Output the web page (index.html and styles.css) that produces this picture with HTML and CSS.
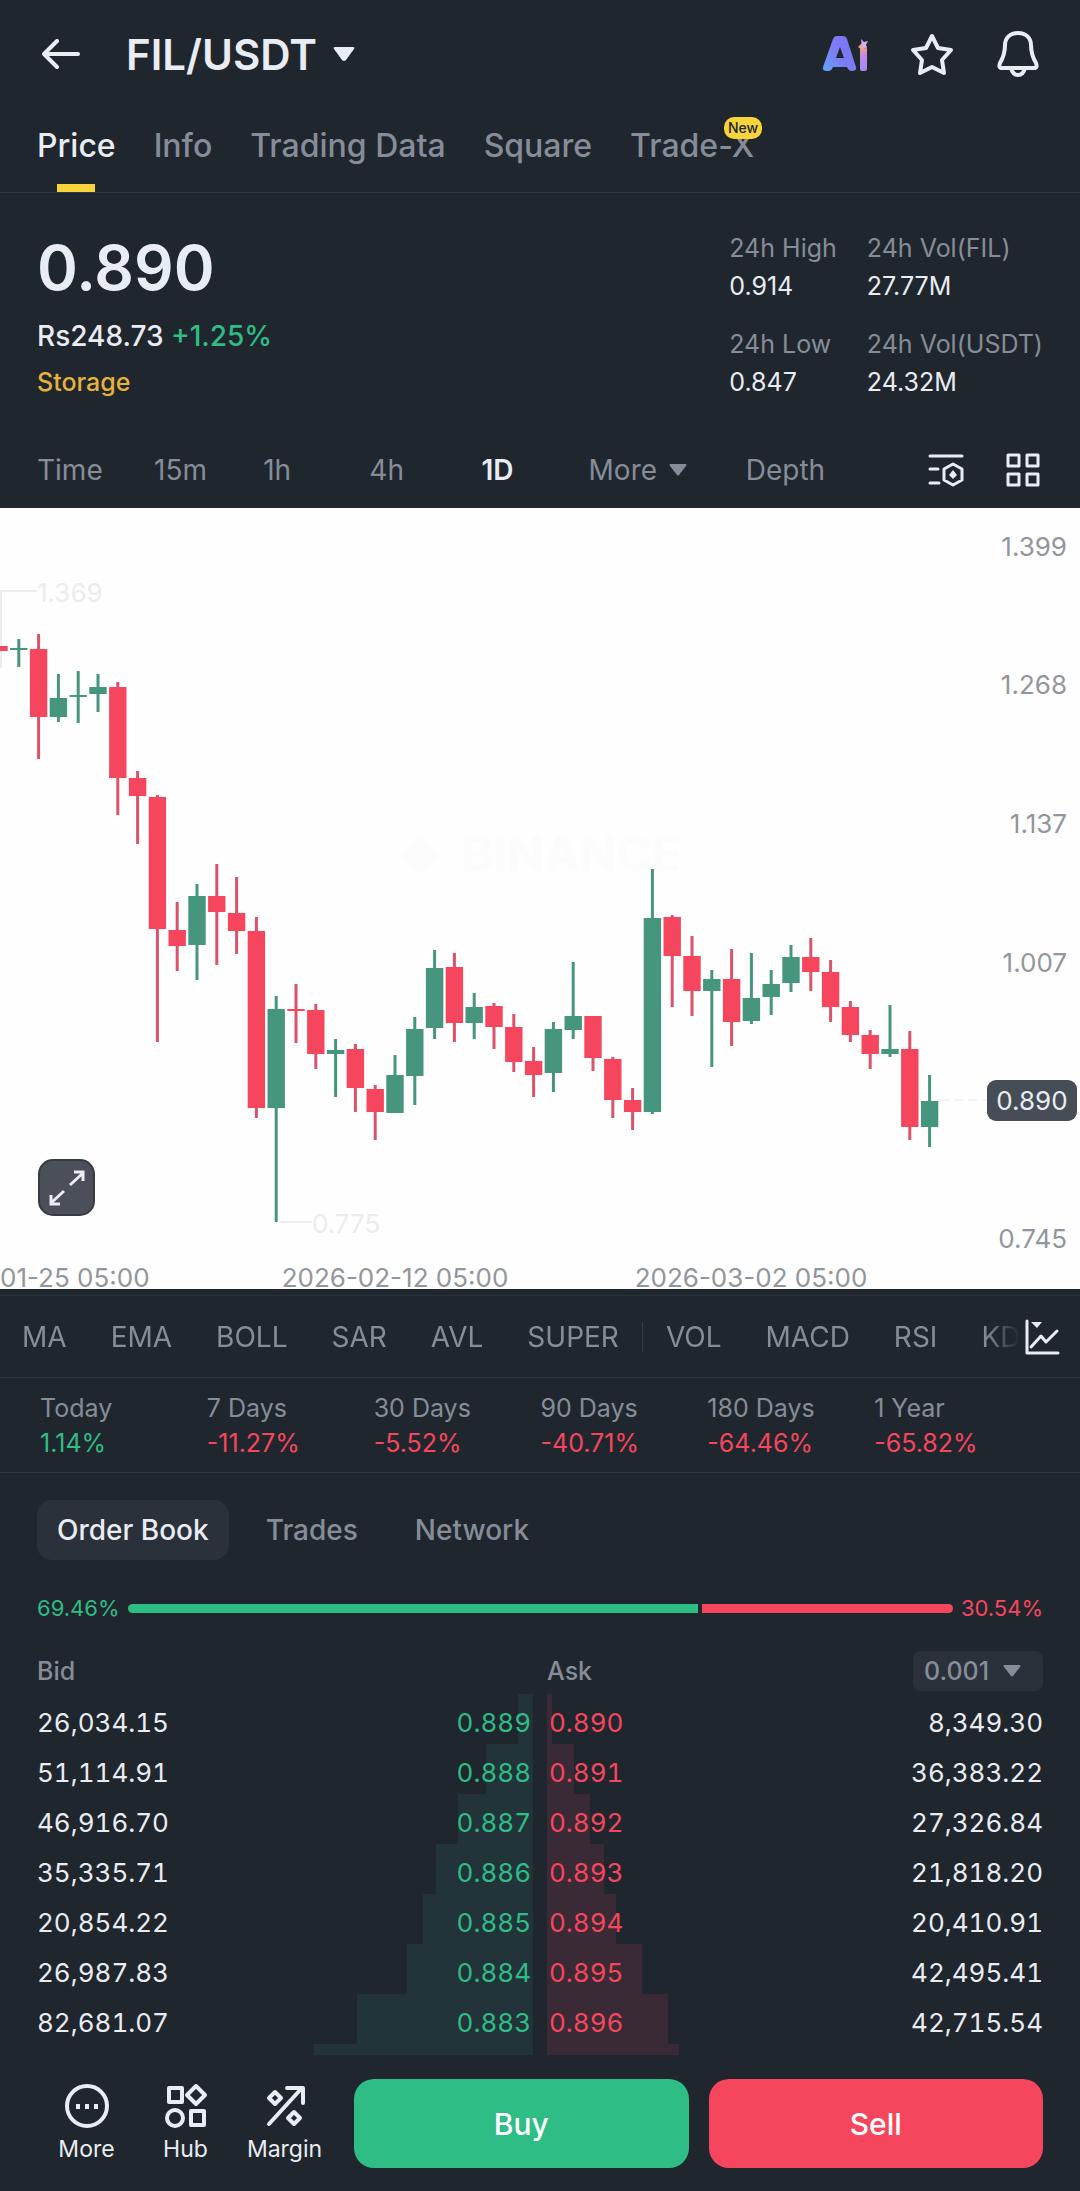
FILE: index.html
```
<!DOCTYPE html>
<html lang="en">
<head>
  <meta charset="UTF-8" />
  <meta name="viewport" content="width=device-width, initial-scale=1" />
  <title>FIL/USDT</title>
  <link rel="stylesheet" href="styles.css">
</head>
<body>
  <!-- Top bar -->
  <header class="topbar">
    <button class="icon-btn back" aria-label="Back">
      <svg width="38" height="30" viewBox="0 0 38 30"><path d="M36 15H2M15 2L2 15l13 13" class="line"/></svg>
    </button>
    <button class="pair">
      <h1>FIL/USDT</h1>
      <svg width="22" height="16" viewBox="0 0 22 16"><path d="M2 1h18q2 0 1 2l-8 11q-2 2-4 0L1 3Q0 1 2 1z" fill="currentColor"/></svg>
    </button>
    <div class="top-actions">
      <button class="icon-btn" aria-label="AI">
        <svg width="46" height="38" viewBox="0 0 46 38">
          <defs>
            <linearGradient id="aiA" x1="0" y1="1" x2="1" y2="0.3">
              <stop offset="0" stop-color="#5fa8ff"/>
              <stop offset="0.5" stop-color="#7d7cf4"/>
              <stop offset="1" stop-color="#7b74f5"/>
            </linearGradient>
            <linearGradient id="aiI" x1="0" y1="0" x2="0" y2="1">
              <stop offset="0" stop-color="#f0a08c"/>
              <stop offset="0.3" stop-color="#c58be0"/>
              <stop offset="1" stop-color="#9c8bf8"/>
            </linearGradient>
          </defs>
          <path fill="url(#aiA)" fill-rule="evenodd" d="M11 4q1-3 4-3h6q3 0 4 3l9 28q1 4-4 4-3 0-4-2l-1-2H11l-1 2q-1 2-5 2-5 0-4-4zM18 12l-4 11h8z"/>
          <path fill="url(#aiI)" d="M38 14l7-1v21q0 2-2 2h-3q-2 0-2-2z"/>
          <path fill="#f0a890" d="M36 12l4-4 5 4-5 3z"/>
          <path fill="#cbb0f5" d="M39 4l3 3 4-1-2 4 1 3-5-1z"/>
        </svg>
      </button>
      <button class="icon-btn" aria-label="Add to favourites">
        <svg width="44" height="44" viewBox="0 0 44 44"><path class="line" d="M22 4l6 12 13 2-9 10 2 13-12-6-12 6 2-13-9-10 13-2z"/></svg>
      </button>
      <button class="icon-btn" aria-label="Alerts">
        <svg width="44" height="48" viewBox="0 0 44 48">
          <path class="line" d="M22 3c-8 0-13 5-13 12 0 9-2 13-5 18-1 3-1 5 2 5h32c3 0 3-2 2-5-3-5-5-9-5-18C35 8 30 3 22 3z"/>
          <path class="line" d="M15 38c1 4 3 7 7 7s6-3 7-7"/>
        </svg>
      </button>
    </div>
  </header>

  <nav class="tabs">
    <a href="#" class="active">Price</a>
    <a href="#">Info</a>
    <a href="#">Trading Data</a>
    <a href="#">Square</a>
    <a href="#">Trade-X<span class="badge">New</span></a>
  </nav>

  <!-- Price summary -->
  <section class="summary">
    <div>
      <div class="last-price">0.890</div>
      <div class="fiat">Rs248.73 <span class="up">+1.25%</span></div>
      <a href="#" class="tag">Storage</a>
    </div>
    <dl class="stats">
      <div><dt>24h High</dt><dd>0.914</dd></div>
      <div><dt>24h Vol(FIL)</dt><dd>27.77M</dd></div>
      <div><dt>24h Low</dt><dd>0.847</dd></div>
      <div><dt>24h Vol(USDT)</dt><dd>24.32M</dd></div>
    </dl>
  </section>

  <!-- Intervals -->
  <div class="intervals">
    <button>Time</button>
    <button>15m</button>
    <button>1h</button>
    <button>4h</button>
    <button class="active">1D</button>
    <button>More <svg width="18" height="12" viewBox="0 0 18 12"><path d="M1 0h16q1 1 0 2l-7 9q-1 1-2 0L1 2q-1-1 0-2z" fill="currentColor"/></svg></button>
    <button>Depth</button>
    <button class="icon-btn" aria-label="Chart settings">
      <svg width="36" height="36" viewBox="0 0 36 36">
        <path class="line thin" d="M2 4h32M2 17h8M2 31h9M25 12l9 5v11l-9 5-9-5V17z"/>
        <path d="M25 18l4 5-4 4-4-4z" fill="currentColor"/>
      </svg>
    </button>
    <button class="icon-btn" aria-label="Layout">
      <svg width="36" height="36" viewBox="0 0 36 36"><path class="line thin" d="M3 3h11v11H3zM22 3h11v11H22zM3 22h11v11H3zM22 22h11v11H22z"/></svg>
    </button>
  </div>

  <!-- Candle chart -->
  <section class="chart">
    <svg id="candles" viewBox="0 0 1080 781" role="img" aria-label="FIL/USDT daily candles">
      <g class="watermark">
        <path d="M420 326l20 20-20 20-20-20z"/>
        <text x="462" y="363">BINANCE</text>
      </g>
      <g class="hint">
        <path d="M1 160V83h36M280 714h32"/>
        <path class="dashed" d="M940 592h46"/>
        <text x="37" y="94">1.369</text>
        <text x="312" y="725">0.775</text>
      </g>
      <g class="axis axis-y">
        <text x="1067" y="48">1.399</text>
        <text x="1067" y="186">1.268</text>
        <text x="1067" y="325">1.137</text>
        <text x="1067" y="464">1.007</text>
        <text x="1067" y="740">0.745</text>
      </g>
      <g class="axis">
        <text x="0" y="779">01-25 05:00</text>
        <text x="395" y="779" text-anchor="middle">2026-02-12 05:00</text>
        <text x="751" y="779" text-anchor="middle">2026-03-02 05:00</text>
      </g>
      <g class="current">
        <rect x="987" y="572" width="90" height="41" rx="9"/>
        <text x="1032" y="602">0.890</text>
      </g>
    </svg>
    <button class="expand" aria-label="Full screen">
      <svg width="36" height="36" viewBox="0 0 36 36"><path d="M21 15L34 3M25 2h9v9M15 21L2 33M2 25v9h9"/></svg>
    </button>
  </section>

  <!-- Indicators -->
  <div class="indicators">
    <div class="indicator-list">
      <button>MA</button>
      <button>EMA</button>
      <button>BOLL</button>
      <button>SAR</button>
      <button>AVL</button>
      <button>SUPER</button>
      <span class="divider"></span>
      <button>VOL</button>
      <button>MACD</button>
      <button>RSI</button>
      <button>KDJ</button>
    </div>
    <button class="icon-btn" aria-label="Indicator settings">
      <svg width="36" height="38" viewBox="0 0 36 38">
        <path class="line thin" d="M3 3v32h31M7 29l10-11 5 6 11-11"/>
        <path d="M7 4h11l-5 6z" fill="currentColor"/>
      </svg>
    </button>
  </div>

  <dl class="periods">
    <div><dt>Today</dt><dd class="up">1.14%</dd></div>
    <div><dt>7 Days</dt><dd class="down">-11.27%</dd></div>
    <div><dt>30 Days</dt><dd class="down">-5.52%</dd></div>
    <div><dt>90 Days</dt><dd class="down">-40.71%</dd></div>
    <div><dt>180 Days</dt><dd class="down">-64.46%</dd></div>
    <div><dt>1 Year</dt><dd class="down">-65.82%</dd></div>
  </dl>

  <!-- Order book -->
  <section class="book">
    <div class="book-tabs">
      <button class="active">Order Book</button>
      <button>Trades</button>
      <button>Network</button>
    </div>

    <div class="ratio">
      <span class="up">69.46%</span>
      <div class="ratio-bar">
        <i class="buy" style="flex-grow: 69.46"></i>
        <i class="sell" style="flex-grow: 30.54"></i>
      </div>
      <span class="down">30.54%</span>
    </div>

    <div class="book-head">
      <span>Bid</span>
      <div class="ask-head">
        <span>Ask</span>
        <label class="step">
          <select aria-label="Price step">
            <option>0.001</option>
            <option>0.01</option>
          </select>
          <svg width="18" height="12" viewBox="0 0 18 12"><path d="M1 0h16q1 1 0 2l-7 9q-1 1-2 0L1 2q-1-1 0-2z" fill="currentColor"/></svg>
        </label>
      </div>
    </div>

    <div class="book-sides">
      <table class="bids" aria-label="Bids">
        <tr style="--depth: 3%"><td>26,034.15</td><td>0.889</td></tr>
        <tr style="--depth: 9.5%"><td>51,114.91</td><td>0.888</td></tr>
        <tr style="--depth: 15%"><td>46,916.70</td><td>0.887</td></tr>
        <tr style="--depth: 19.5%"><td>35,335.71</td><td>0.886</td></tr>
        <tr style="--depth: 22.2%"><td>20,854.22</td><td>0.885</td></tr>
        <tr style="--depth: 25.4%"><td>26,987.83</td><td>0.884</td></tr>
        <tr style="--depth: 35.4%"><td>82,681.07</td><td>0.883</td></tr>
        <tr class="cut" style="--depth: 44.2%"><td></td><td></td></tr>
      </table>
      <table class="asks" aria-label="Asks">
        <tr style="--depth: 1%"><td>0.890</td><td>8,349.30</td></tr>
        <tr style="--depth: 5.4%"><td>0.891</td><td>36,383.22</td></tr>
        <tr style="--depth: 8.6%"><td>0.892</td><td>27,326.84</td></tr>
        <tr style="--depth: 11.5%"><td>0.893</td><td>21,818.20</td></tr>
        <tr style="--depth: 13.9%"><td>0.894</td><td>20,410.91</td></tr>
        <tr style="--depth: 19.2%"><td>0.895</td><td>42,495.41</td></tr>
        <tr style="--depth: 24.4%"><td>0.896</td><td>42,715.54</td></tr>
        <tr class="cut" style="--depth: 26.6%"><td></td><td></td></tr>
      </table>
    </div>
  </section>

  <!-- Bottom actions -->
  <footer class="bottom">
    <div class="shortcuts">
      <a href="#">
        <svg width="44" height="46" viewBox="0 0 44 46">
          <circle class="line" cx="22" cy="23" r="20"/>
          <path d="M11 21h4v5h-4zM20 21h4v5h-4zM29 21h4v5h-4z" fill="currentColor"/>
        </svg>
        More
      </a>
      <a href="#">
        <svg width="44" height="46" viewBox="0 0 44 46">
          <path class="line" d="M5 5h13v14H5zM27 28h13v14H27zM32 3l9 9-9 9-9-9z"/>
          <circle class="line" cx="11" cy="35" r="8"/>
        </svg>
        Hub
      </a>
      <a href="#">
        <svg width="44" height="46" viewBox="0 0 44 46">
          <path class="line" d="M6 41L38 6M24 5h16v15M12 9l6 6-6 6-6-6zM31 29l6 6-6 6-6-6z"/>
        </svg>
        Margin
      </a>
    </div>
    <button class="trade buy">Buy</button>
    <button class="trade sell">Sell</button>
  </footer>

  <script src="chart.js"></script>
</body>
</html>
```
FILE: styles.css
```
/* === BASE === */
* {
  box-sizing: border-box;
}

body {
  margin: 0;
  min-height: 100vh;
  display: flex;
  flex-direction: column;
  font-family: Inter, "Liberation Sans", sans-serif;
  font-size: 28px;
  color: #eaecf3;
  background: #20262e;
}

button,
select {
  font: inherit;
  color: inherit;
  background: none;
  border: 0;
  padding: 0;
  margin: 0;
}

a {
  color: inherit;
  text-decoration: none;
}

h1,
dl,
dd {
  margin: 0;
}

svg {
  display: block;
  flex: none;
}

.line {
  fill: none;
  stroke: currentColor;
  stroke-width: 4;
  stroke-linecap: round;
  stroke-linejoin: round;
}

.thin {
  stroke-width: 3;
}

.up {
  color: #2ebd85;
}

.down {
  color: #f6465d;
}

/* === TOP BAR === */
.topbar {
  display: flex;
  align-items: center;
  height: 108px;
  padding: 0 40px 0 42px;
}

.pair {
  display: flex;
  align-items: center;
  gap: 16px;
  margin-left: 46px;
}

.pair h1 {
  font-size: 42px;
  font-weight: 600;
}

.top-actions {
  display: flex;
  align-items: center;
  gap: 42px;
  margin-left: auto;
}

/* === TABS === */
.tabs {
  display: flex;
  gap: 38px;
  height: 85px;
  padding: 0 37px;
  border-bottom: 1px solid #2e353e;
  font-size: 32px;
  font-weight: 500;
  line-height: 76px;
  color: #868d98;
}

.tabs a {
  position: relative;
}

.tabs .active {
  color: #eaecf3;
}

.tabs .active::after {
  content: "";
  position: absolute;
  left: 50%;
  bottom: 0;
  width: 38px;
  height: 8px;
  margin-left: -19px;
  background: #f8d33a;
}

.badge {
  position: absolute;
  top: 9px;
  right: -8px;
  padding: 0 4px;
  border-radius: 10px;
  background: #f8d33a;
  color: #20262e;
  font-size: 14px;
  line-height: 22px;
}

/* === PRICE SUMMARY === */
.summary {
  display: flex;
  justify-content: space-between;
  padding: 37px 37px 0;
  height: 243px;
}

.last-price {
  font-size: 62px;
  font-weight: 600;
  line-height: 76px;
}

.fiat {
  margin-top: 12px;
  font-weight: 500;
  line-height: 36px;
}

.tag {
  display: block;
  margin-top: 12px;
  color: #e5b33c;
  font-size: 25px;
  font-weight: 500;
  line-height: 32px;
}

.stats {
  display: grid;
  grid-template-columns: auto auto;
  column-gap: 30px;
  row-gap: 22px;
  align-content: start;
  font-size: 25px;
}

.stats dt {
  color: #868d98;
  line-height: 36px;
}

.stats dd {
  line-height: 36px;
  margin-top: 2px;
}

/* === INTERVALS === */
.intervals {
  display: grid;
  grid-template-columns: 117fr 109fr 106fr 112fr 107fr 157fr 182fr 77fr 36fr;
  align-items: center;
  height: 72px;
  padding: 0 39px 4px 37px;
  color: #868d98;
}

.intervals button {
  display: flex;
  align-items: center;
  gap: 12px;
}

.intervals .active {
  font-weight: 600;
}

.intervals .active,
.intervals .icon-btn {
  color: #eaecf3;
}

/* === CHART === */
.chart {
  position: relative;
  background: #fefefe;
}

#candles {
  width: 100%;
  height: auto;
  overflow: visible;
  font-size: 26px;
}

.green {
  fill: #45957f;
  stroke: #45957f;
}

.red {
  fill: #f6465d;
  stroke: #d9536a;
}

.wick {
  stroke-width: 3;
}

.body {
  stroke: none;
}

.watermark {
  fill: #fcfcfc;
  font-size: 48px;
  font-weight: 700;
}

.hint path {
  fill: none;
  stroke: #ededee;
  stroke-width: 2;
}

.hint .dashed {
  stroke: #f3f3f4;
  stroke-dasharray: 10 4;
}

.hint text {
  fill: #ececed;
}

.axis {
  fill: #92969b;
}

.axis-y {
  text-anchor: end;
}

.current rect {
  fill: #474d57;
}

.current text {
  fill: #eaecf3;
  text-anchor: middle;
}

.expand {
  position: absolute;
  left: 38px;
  bottom: 73px;
  display: grid;
  place-items: center;
  width: 57px;
  height: 57px;
  border: 2px solid #363b43;
  border-radius: 15px;
  background: #4a4f59;
}

.expand path {
  fill: none;
  stroke: #eaecf3;
  stroke-width: 3;
}

/* === INDICATORS === */
.indicators {
  display: flex;
  align-items: center;
  height: 83px;
  margin-top: 6px;
  padding: 0 20px 0 22px;
  border-top: 1px solid #2e353e;
  border-bottom: 1px solid #2e353e;
}

.indicator-list {
  display: flex;
  align-items: center;
  gap: 44px;
  flex: 1;
  min-width: 0;
  margin-right: 4px;
  overflow: hidden;
  color: #868d98;
  -webkit-mask-image: linear-gradient(to left, transparent, #000 36px);
  mask-image: linear-gradient(to left, transparent, #000 36px);
}

.indicator-list button {
  flex: none;
}

.divider {
  flex: none;
  width: 1px;
  height: 30px;
  margin: 0 -21px;
  background: #363d47;
}

/* === PERIODS === */
.periods {
  display: grid;
  grid-template-columns: repeat(6, 1fr);
  padding: 13px 39px 11px 40px;
  border-bottom: 1px solid #2e353e;
  font-size: 25px;
  line-height: 35px;
}

.periods dt {
  color: #868d98;
}

/* === ORDER BOOK === */
.book {
  padding: 27px 37px 0;
}

.book-tabs {
  display: flex;
  gap: 17px;
  font-weight: 500;
  color: #868d98;
}

.book-tabs button {
  height: 60px;
  padding: 0 20px;
  border-radius: 15px;
}

.book-tabs .active {
  background: #2b313b;
  color: #eaecf3;
}

.ratio {
  display: flex;
  align-items: center;
  gap: 8px;
  margin-top: 32px;
  font-size: 22px;
  line-height: 32px;
}

.ratio-bar {
  display: flex;
  gap: 4px;
  flex: 1;
  height: 9px;
  border-radius: 5px;
  overflow: hidden;
}

.ratio-bar i {
  flex-basis: 0;
}

.buy {
  background: #2ebd85;
}

.sell {
  background: #f6465d;
}

.book-head,
.book-sides {
  display: grid;
  grid-template-columns: 1fr 1fr;
  column-gap: 14px;
}

.book-head {
  align-items: center;
  margin-top: 27px;
  font-size: 25px;
  font-weight: 500;
  color: #868d98;
}

.ask-head {
  display: flex;
  align-items: center;
  justify-content: space-between;
}

.step {
  display: flex;
  align-items: center;
  gap: 13px;
  height: 40px;
  padding: 0 22px 0 11px;
  border-radius: 8px;
  background: #2b313b;
}

.step select {
  appearance: none;
}

.book-sides {
  margin-top: 3px;
  font-variant-numeric: tabular-nums;
}

.book-sides table {
  width: 100%;
  border-collapse: collapse;
}

.book-sides tr {
  height: 50px;
}

.book-sides .cut {
  height: 11px;
}

.book-sides td {
  padding: 8px 0 0;
  font-size: 26px;
  line-height: 42px;
}

.book-sides .cut td {
  padding: 0;
  line-height: 11px;
}

.book-sides td:last-child {
  text-align: right;
}

.bids tr {
  background: linear-gradient(to left, #223439 var(--depth), transparent var(--depth));
}

.bids td:last-child {
  padding-right: 2px;
  color: #2ebd85;
}

.asks tr {
  background: linear-gradient(to right, #3a2a35 var(--depth), transparent var(--depth));
}

.asks td:first-child {
  padding-left: 2px;
  color: #f6465d;
}

/* === BOTTOM ACTIONS === */
.bottom {
  display: flex;
  align-items: center;
  gap: 20px;
  margin-top: auto;
  padding: 20px 37px 23px;
}

.shortcuts {
  display: flex;
  flex: none;
  width: 297px;
}

.shortcuts a {
  display: flex;
  flex: 1;
  flex-direction: column;
  align-items: center;
  gap: 4px;
  font-size: 23px;
  line-height: 32px;
}

.trade {
  flex: 1;
  height: 89px;
  border-radius: 20px;
  font-size: 30px;
  font-weight: 500;
  color: #fff;
}
```
FILE: chart.js
```
// One candle per day: colour, high, body top, body bottom, low
const candles = [
  ['r', 138, 138, 143, 143],
  ['g', 131, 140, 142, 159],
  ['r', 126, 141, 209, 251],
  ['g', 166, 190, 209, 214],
  ['g', 163, 187, 189, 215],
  ['g', 166, 179, 186, 204],
  ['r', 174, 179, 270, 307],
  ['r', 263, 270, 288, 336],
  ['r', 287, 289, 421, 534],
  ['r', 394, 422, 438, 463],
  ['g', 376, 388, 437, 472],
  ['r', 356, 388, 404, 457],
  ['r', 369, 405, 423, 446],
  ['r', 409, 423, 600, 610],
  ['g', 488, 501, 600, 714],
  ['r', 476, 501, 503, 535],
  ['r', 496, 502, 546, 561],
  ['g', 531, 542, 546, 589],
  ['r', 536, 541, 580, 604],
  ['r', 577, 581, 604, 632],
  ['g', 547, 567, 605, 605],
  ['g', 509, 521, 568, 597],
  ['g', 442, 460, 520, 531],
  ['r', 445, 459, 515, 534],
  ['g', 485, 499, 515, 531],
  ['r', 495, 498, 519, 541],
  ['r', 506, 519, 554, 564],
  ['r', 539, 553, 567, 589],
  ['g', 514, 521, 565, 584],
  ['g', 454, 508, 522, 531],
  ['r', 508, 508, 550, 563],
  ['r', 549, 551, 592, 610],
  ['r', 580, 592, 604, 622],
  ['g', 361, 410, 604, 606],
  ['r', 407, 409, 448, 499],
  ['r', 428, 448, 483, 508],
  ['g', 462, 471, 483, 559],
  ['r', 441, 471, 514, 538],
  ['g', 445, 490, 513, 516],
  ['g', 462, 476, 489, 507],
  ['g', 437, 449, 475, 484],
  ['r', 430, 449, 464, 483],
  ['r', 452, 464, 499, 514],
  ['r', 493, 499, 527, 534],
  ['r', 522, 527, 546, 561],
  ['g', 497, 541, 546, 549],
  ['r', 523, 541, 619, 632],
  ['g', 567, 593, 619, 639]
];

const SVG_NS = 'http://www.w3.org/2000/svg';
const STEP = 19.8;
const BODY = 17.4;
const chart = document.getElementById('candles');

function add(name, attrs) {
  const el = document.createElementNS(SVG_NS, name);
  for (const key in attrs) el.setAttribute(key, attrs[key]);
  chart.appendChild(el);
}

candles.forEach(([side, high, top, bottom, low], i) => {
  const x = i * STEP - 1;
  const color = side === 'g' ? 'green' : 'red';
  add('line', { x1: x, x2: x, y1: high, y2: low, class: 'wick ' + color });
  add('rect', { x: x - BODY / 2, y: top, width: BODY, height: bottom - top, class: 'body ' + color });
});
```
